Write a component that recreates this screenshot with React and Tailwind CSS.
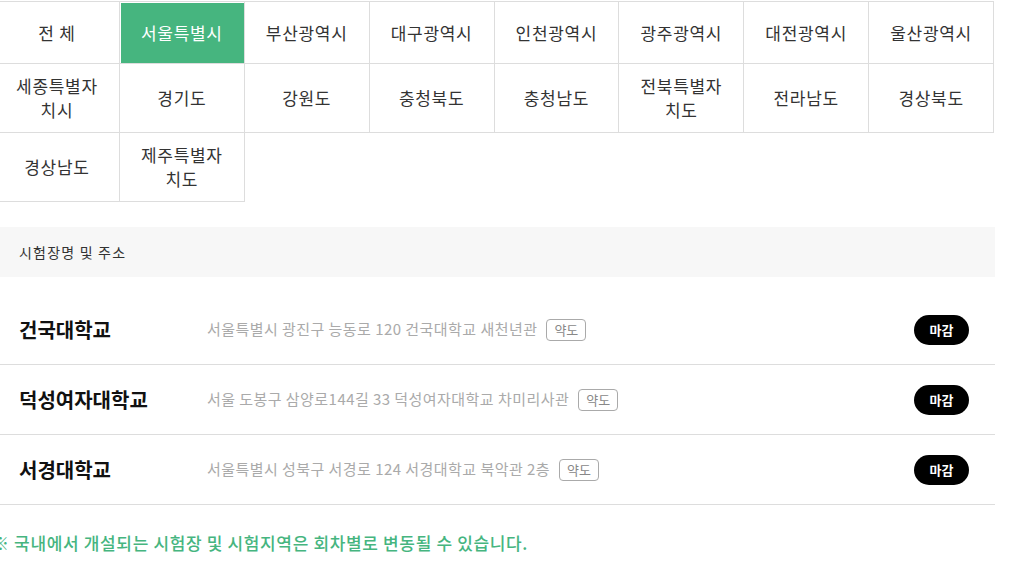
import React, { useState } from "react";

const regions = [
  "전 체",
  "서울특별시",
  "부산광역시",
  "대구광역시",
  "인천광역시",
  "광주광역시",
  "대전광역시",
  "울산광역시",
  "세종특별자치시",
  "경기도",
  "강원도",
  "충청북도",
  "충청남도",
  "전북특별자치도",
  "전라남도",
  "경상북도",
  "경상남도",
  "제주특별자치도",
];

const sites = [
  { name: "건국대학교", addr: "서울특별시 광진구 능동로 120 건국대학교 새천년관" },
  { name: "덕성여자대학교", addr: "서울 도봉구 삼양로144길 33 덕성여자대학교 차미리사관" },
  { name: "서경대학교", addr: "서울특별시 성북구 서경로 124 서경대학교 북악관 2층" },
];

export default function App() {
  const [selected, setSelected] = useState("서울특별시"); // current region tab

  return (
    <div className="min-h-screen bg-white font-['Noto_Sans_CJK_KR','Noto_Sans',sans-serif]">
      <div className="ml-[-6px] w-[1001px] pt-[1px]">
        {/* Region tabs */}
        <div className="grid w-[1000px] grid-cols-8 border-t border-l border-[#dddddd]">
          {regions.map((r) => (
            <button
              key={r}
              onClick={() => setSelected(r)}
              className={
                r === selected
                  ? "flex min-h-[62px] items-center justify-center border-r border-b border-[#dddddd] bg-[#46b57f] px-[15px] py-[10px] text-[17px] leading-[24px] tracking-[0.7px] text-white shadow-[inset_1px_1px_0_#ffffff]"
                  : "flex min-h-[62px] items-center justify-center border-r border-b border-[#dddddd] bg-white px-[15px] py-[10px] text-[17px] leading-[24px] tracking-[0.7px] text-[#333333]"
              }
            >
              {r}
            </button>
          ))}
        </div>

        {/* Table header */}
        <div className="mt-[25px] flex h-[50px] w-[1001px] items-center bg-[#f7f7f7] pl-[25px] text-[14px] tracking-[1.2px] text-[#333333]">
          시험장명 및 주소
        </div>

        {/* Site list */}
        <ul className="mt-[18px]">
          {sites.map((s) => (
            <li
              key={s.name}
              className="flex h-[70px] items-center border-b border-[#dddddd] pr-[26px] pl-[25px]"
            >
              <div className="w-[188px] shrink-0 text-[20px] font-semibold text-[#111111]">
                {s.name}
              </div>
              <div className="flex flex-1 items-center">
                <span className="text-[15px] tracking-[0.45px] text-[#aaaaaa]">{s.addr}</span>
                <span className="ml-[9px] rounded-[4px] border border-[#aaaaaa] px-[7px] text-[13px] leading-[20px] text-[#888888]">
                  약도
                </span>
              </div>
              <span className="flex h-[30px] w-[55px] items-center justify-center rounded-full bg-black text-[13px] font-bold text-white">
                마감
              </span>
            </li>
          ))}
        </ul>

        <p className="mt-[26px] ml-[-2px] text-[17px] leading-[24px] font-medium tracking-[0.65px] text-[#46b57f]">
          ※ 국내에서 개설되는 시험장 및 시험지역은 회차별로 변동될 수 있습니다.
        </p>
      </div>
    </div>
  );
}
